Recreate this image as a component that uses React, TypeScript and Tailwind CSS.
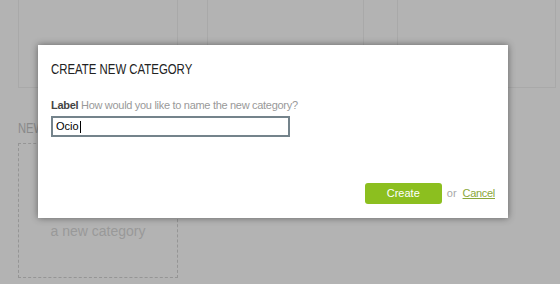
import React from 'react';

export default function App() {
  return (
    <div className="relative h-[284px] w-[560px] overflow-hidden bg-[#b3b3b3] font-['Liberation_Sans',Arial,sans-serif]">
      {/* Page behind the overlay */}
      <div className="flex flex-col px-[18px]">
        <div className="flex h-[88px]">
          <div className="h-full w-[160px] shrink-0 border-x border-b border-[#a9a9a9]" />
          <div className="ml-[29px] h-full w-[157px] shrink-0 border-x border-b border-[#a9a9a9]" />
          <div className="ml-[33px] h-full w-[159px] shrink-0 border-x border-b border-[#a9a9a9]" />
        </div>

        <div className="mt-[33px] h-[14px] origin-left scale-x-[0.8] text-[14px] leading-[14px] text-[#8a8a8a] whitespace-nowrap">
          NEW
        </div>

        <div className="mt-[8px] h-[135px] w-[160px] border border-dashed border-[#959595] pt-[57px] text-center text-[14px] leading-[20px] text-[#999999]">
          <div>Click here to create</div>
          <div>a new category</div>
        </div>
      </div>

      {/* Dialog */}
      <div className="absolute left-[38px] top-[45px] flex h-[173px] w-[470px] flex-col bg-white px-[13px] shadow-[0_0_7px_rgba(0,0,0,0.45)]">
        <div className="mt-[16px] h-[15px] origin-left scale-x-[0.76] text-[15px] leading-[15px] text-[#222222] whitespace-nowrap">
          CREATE NEW CATEGORY
        </div>

        <div className="mt-[23px] text-[11px] leading-[13px] tracking-[-0.3px] text-[#999999] whitespace-nowrap">
          <span className="font-bold text-[#444444]">Label</span> How would you like to name the new category?
        </div>

        <div className="mt-[4px] flex h-[21px] w-[239px] items-center border-2 border-[#74838b] pl-[3px] text-[11px] text-black">
          <span>Ocio</span>
          <span className="ml-px h-[12px] w-px bg-black" />
        </div>

        <div className="mt-auto flex items-center justify-end pb-[14px] text-[11px]">
          <button className="h-[21px] w-[77px] rounded-[3px] bg-[#8cbf1f] text-white">Create</button>
          <span className="ml-[5px] text-[#a8a8a8]">or</span>
          <a className="ml-[6px] tracking-[-0.3px] text-[#8aa83a] underline">Cancel</a>
        </div>
      </div>
    </div>
  );
}
